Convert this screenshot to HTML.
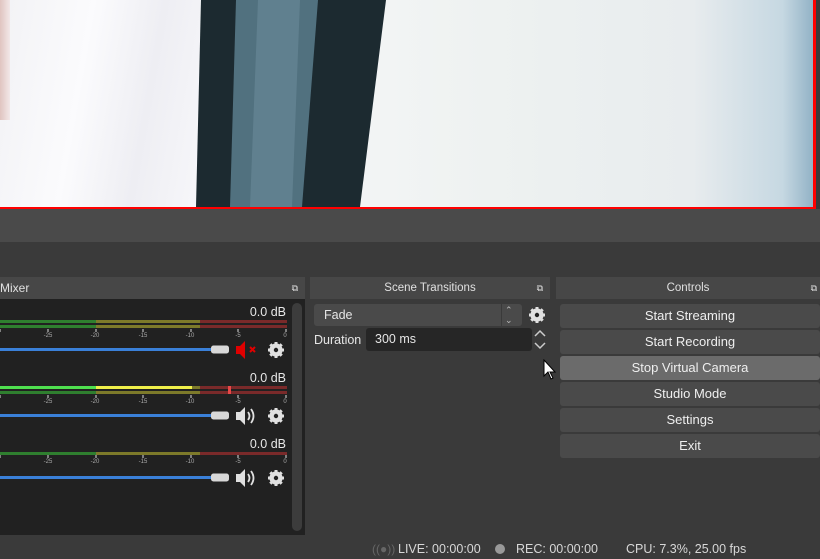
<!DOCTYPE html>
<html><head><meta charset="utf-8"><style>
*{margin:0;padding:0;box-sizing:border-box}
body{width:820px;height:559px;overflow:hidden;background:#3a3a3a;font-family:"Liberation Sans",sans-serif;position:relative;color:#e6e6e6}
.a{position:absolute}
.hdr{position:absolute;top:277px;height:22px;background:#474747;font-size:11.5px;line-height:22px;text-align:center;color:#e0e0e0}
.btn{position:absolute;left:560px;width:260px;height:24px;background:#4a4a4a;border-radius:3px;font-size:13px;line-height:24px;text-align:center;color:#efefef}
.db{position:absolute;font-size:12.5px;color:#e8e8e8;width:60px;text-align:right;left:226px}
</style></head><body>
<div class="a" style="left:0;top:0;width:815px;height:207px;background:linear-gradient(90deg,#e9eef0 0%,#f4f5f6 40%,#eef2f1 60%,#e8ecee 85%,#c6d8e2 96%,#8fb0c4 100%)"></div>
<div class="a" style="left:0;top:0;width:200px;height:207px;background:linear-gradient(100deg,#f2f2f5 0%,#fbfbfd 40%,#eeeef3 70%,#f7f7fa 100%)"></div>
<div class="a" style="left:0;top:0;width:10px;height:120px;background:linear-gradient(90deg,#e0c4c0,#f2e8e8)"></div>
<svg class="a" style="left:0;top:0" width="815" height="207"><polygon points="201,0 386,0 360,207 196,207" fill="#1c2a30"/><polygon points="236,0 318,0 302,207 230,207" fill="#51717f"/><polygon points="258,0 300,0 292,207 250,207" fill="#6a8a99" opacity=".6"/></svg>
<div class="a" style="left:0;top:207px;width:816px;height:2px;background:#ff0000"></div>
<div class="a" style="left:813px;top:0;width:3px;height:212px;background:#ff0000"></div>
<div class="a" style="left:0;top:209px;width:820px;height:33px;background:#4a4a4a"></div>
<div class="hdr" style="left:0;width:305px;text-align:left;font-size:12px">Mixer<span style="position:absolute;right:7px;font-size:9px">⧉</span></div>
<div class="hdr" style="left:310px;width:240px">Scene Transitions<span style="position:absolute;right:7px;font-size:9px">⧉</span></div>
<div class="hdr" style="left:556px;width:264px">Controls<span style="position:absolute;right:3px;font-size:9px">⧉</span></div>
<div class="a" style="left:0;top:299px;width:305px;height:236px;background:#212121"></div>
<div class="a" style="left:292px;top:303px;width:10px;height:228px;background:#3c3c3c;border-radius:5px"></div>
<div class="db" style="top:305px">0.0 dB</div>
<div class="db" style="top:371px">0.0 dB</div>
<div class="db" style="top:437px">0.0 dB</div>
<svg class="a" style="left:0;top:318px" width="290" height="170" font-family="Liberation Sans" font-size="6" fill="#aaa" text-anchor="middle">
<g>
<rect x="0" y="2" width="96" height="3" fill="#2f7f2f"/><rect x="96" y="2" width="104" height="3" fill="#7d7a2a"/><rect x="200" y="2" width="87" height="3" fill="#7a2a2a"/>
<rect x="0" y="7" width="96" height="3" fill="#2f7f2f"/><rect x="96" y="7" width="104" height="3" fill="#7d7a2a"/><rect x="200" y="7" width="87" height="3" fill="#7a2a2a"/>
<path d="M0 11v3M48 11v3M96 11v3M143 11v3M191 11v3M238 11v3M286 11v3" stroke="#ddd"/>
<text x="48" y="19">-25</text><text x="95" y="19">-20</text><text x="143" y="19">-15</text><text x="190" y="19">-10</text><text x="238" y="19">-5</text><text x="285" y="19">0</text>
<rect x="0" y="30" width="213" height="3" fill="#3a80d8"/><rect x="211" y="27.5" width="18" height="8" rx="2.5" fill="#d8d8d8"/>
</g>
<g transform="translate(0,66)">
<rect x="0" y="2" width="96" height="3" fill="#4fe04f"/><rect x="96" y="2" width="96" height="3" fill="#f0f04a"/><rect x="192" y="2" width="8" height="3" fill="#7d7a2a"/><rect x="200" y="2" width="87" height="3" fill="#7a2a2a"/>
<rect x="0" y="7" width="96" height="3" fill="#2f7f2f"/><rect x="96" y="7" width="104" height="3" fill="#7d7a2a"/><rect x="200" y="7" width="87" height="3" fill="#7a2a2a"/>
<rect x="228" y="2" width="3" height="8" fill="#e84848"/>
<path d="M0 11v3M48 11v3M96 11v3M143 11v3M191 11v3M238 11v3M286 11v3" stroke="#ddd"/>
<text x="48" y="19">-25</text><text x="95" y="19">-20</text><text x="143" y="19">-15</text><text x="190" y="19">-10</text><text x="238" y="19">-5</text><text x="285" y="19">0</text>
<rect x="0" y="30" width="213" height="3" fill="#3a80d8"/><rect x="211" y="27.5" width="18" height="8" rx="2.5" fill="#d8d8d8"/>
</g>
<g transform="translate(0,132)">
<rect x="0" y="2" width="96" height="3" fill="#2f7f2f"/><rect x="96" y="2" width="104" height="3" fill="#7d7a2a"/><rect x="200" y="2" width="87" height="3" fill="#7a2a2a"/>
<path d="M0 5v3M48 5v3M96 5v3M143 5v3M191 5v3M238 5v3M286 5v3" stroke="#ddd"/>
<text x="48" y="13">-25</text><text x="95" y="13">-20</text><text x="143" y="13">-15</text><text x="190" y="13">-10</text><text x="238" y="13">-5</text><text x="285" y="13">0</text>
<rect x="0" y="26" width="213" height="3" fill="#3a80d8"/><rect x="211" y="23.5" width="18" height="8" rx="2.5" fill="#d8d8d8"/>
</g>
</svg>
<svg class="a" style="left:234px;top:338px" width="60" height="150">
<defs><g id="gear"><circle cx="0" cy="0" r="5" fill="none" stroke="#e0e0e0" stroke-width="3.2"/><g stroke="#e0e0e0" stroke-width="3"><path d="M0 -8V8M-8 0H8M-5.7 -5.7L5.7 5.7M-5.7 5.7L5.7 -5.7"/></g><circle r="2.2" fill="#212121"/></g>
<g id="spk"><polygon points="2,-4 6,-4 11,-9 11,9 6,4 2,4" fill="#e0e0e0"/><path d="M14 -4Q17 0 14 4M17 -7Q22 0 17 7" stroke="#e0e0e0" stroke-width="1.8" fill="none"/></g></defs>
<polygon points="2,8 6,8 11,3 11,21 6,16 2,16" fill="#e00000"/><path d="M16 9l5 5M21 9l-5 5" stroke="#e00000" stroke-width="2"/>
<use href="#gear" x="42" y="12"/>
<use href="#spk" x="0" y="78"/><use href="#gear" x="42" y="78"/>
<use href="#spk" x="0" y="140"/><use href="#gear" x="42" y="140"/>
</svg>
<div class="a" style="left:314px;top:304px;width:208px;height:22px;background:#4a4a4a;border-radius:3px;font-size:12.5px;line-height:22px;padding-left:10px">Fade</div>
<div class="a" style="left:501px;top:304px;width:1px;height:22px;background:#3a3a3a"></div>
<div class="a" style="left:505px;top:305px;font-size:9px;color:#bbb;line-height:10px">⌃<br>⌄</div>
<svg class="a" style="left:526px;top:304px" width="22" height="22"><use href="#gear" x="11" y="11"/></svg>
<div class="a" style="left:314px;top:333px;font-size:12.5px">Duration</div>
<div class="a" style="left:366px;top:328px;width:166px;height:23px;background:#262626;border-radius:3px;font-size:12.5px;line-height:23px;padding-left:9px">300 ms</div>
<svg class="a" style="left:532px;top:328px" width="16" height="24"><path d="M3 8l5-5 5 5M3 15l5 5 5-5" stroke="#ccc" stroke-width="1.5" fill="none"/></svg>
<svg class="a" style="left:543px;top:359px" width="16" height="22"><path d="M1 1v16l4-4 3 7 2-1-3-6h5z" fill="#fff" stroke="#000" stroke-width="1"/></svg>
<div class="btn" style="top:304px">Start Streaming</div>
<div class="btn" style="top:330px">Start Recording</div>
<div class="btn" style="top:356px;background:#6b6b6b">Stop Virtual Camera</div>
<div class="btn" style="top:382px">Studio Mode</div>
<div class="btn" style="top:408px">Settings</div>
<div class="btn" style="top:434px">Exit</div>
<div class="a" style="left:372px;top:542px;font-size:12px;color:#666">((●))</div>
<div class="a" style="left:398px;top:542px;font-size:12.5px;color:#d8d8d8;white-space:pre">LIVE: 00:00:00</div>
<div class="a" style="left:495px;top:544px;width:10px;height:10px;border-radius:5px;background:#999"></div>
<div class="a" style="left:516px;top:542px;font-size:12.5px;color:#d8d8d8">REC: 00:00:00</div>
<div class="a" style="left:626px;top:542px;font-size:12.5px;color:#d8d8d8">CPU: 7.3%, 25.00 fps</div>
</body></html>
